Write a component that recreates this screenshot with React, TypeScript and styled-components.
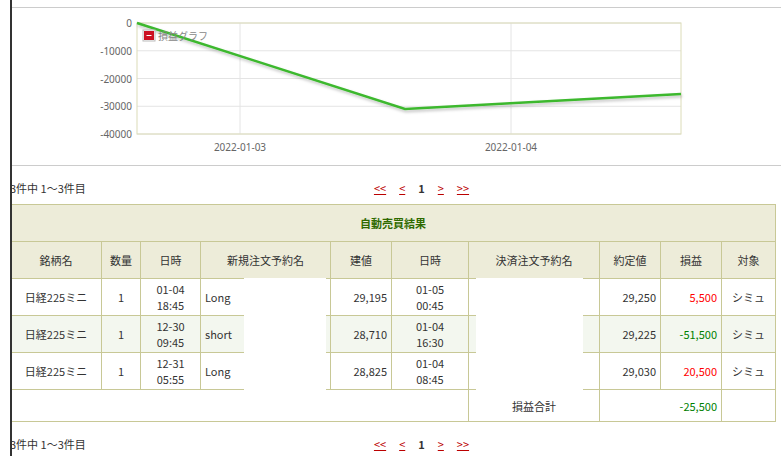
import React from 'react';
import styled, { createGlobalStyle } from 'styled-components';

const Global = createGlobalStyle`
  body { margin: 0; background: #fff; font-family: "Noto Sans CJK JP", "Noto Sans", sans-serif; font-size: 11px; color: #333; }
`;

const Page = styled.div`
  margin-left: 10px;
  border-left: 2px solid #333;
  padding-top: 7px;
  width: 771px;
  height: 456px;
  overflow: hidden;
`;

const ChartBox = styled.div`
  border-top: 1px solid #ccc;
  border-bottom: 1px solid #ccc;
  height: 157px;
`;

const Pager = styled.div`
  display: grid;
  grid-template-columns: 1fr auto 1fr;
  align-items: center;
  height: 38px;
  padding-top: 6px;
  box-sizing: border-box;
  margin-left: -2px;
  font-size: 11px;
`;

const Links = styled.div`
  display: flex;
  gap: 13px;
  margin-left: 50px;
  a { color: #b00; text-decoration: underline; }
  b { color: #333; }
`;

const Table = styled.table`
  border-collapse: collapse;
  width: 765px;
  margin-left: -2px;
  table-layout: fixed;
  td, th { border: 1px solid #c8c896; padding: 0 4px; font-weight: normal; font-size: 11px; line-height: 16px; }
`;

const Title = styled.th`
  background: #edecd9;
  height: 36px;
  color: #2f6a00;
  && { font-weight: bold; }
`;

const Head = styled.th`
  background: #edecd9;
  height: 36px;
`;

const Row = styled.tr<{ $alt?: boolean }>`
  background: ${p => (p.$alt ? '#f3f7ef' : '#fff')};
  td { height: 36px; }
`;

const SumRow = styled.tr`
  td { height: 31px; padding-top: 0; padding-bottom: 0; }
`;

const Cell = styled.td<{ $align?: string; $color?: string }>`
  text-align: ${p => p.$align || 'center'};
  color: ${p => p.$color || '#333'};
  position: relative;
`;

const Blank = styled.span<{ $l: number; $r: number }>`
  position: absolute;
  top: -1px;
  bottom: -1px;
  left: ${p => p.$l}px;
  right: ${p => p.$r}px;
  background: #fff;
`;

const rows = [
  ['01-04', '18:45', 'Long', '29,195', '01-05', '00:45', '29,250', '5,500', '#f00'],
  ['12-30', '09:45', 'short', '28,710', '01-04', '16:30', '29,225', '-51,500', '#008000'],
  ['12-31', '05:55', 'Long', '28,825', '01-04', '08:45', '29,030', '20,500', '#f00'],
];

const Chart = () => {
  const x0 = 125, x1 = 669, y0 = 15, y1 = 126;
  const yl = [0, -10000, -20000, -30000, -40000];
  return (
    <svg width="771" height="157" style={{ display: 'block' }}>
      <defs>
        <filter id="sh"><feDropShadow dx="1" dy="2" stdDeviation="1.5" floodColor="#000" floodOpacity="0.25" /></filter>
      </defs>
      {yl.map((v, i) => {
        const y = y0 + (i * (y1 - y0)) / 4;
        return (
          <g key={v}>
            <line x1={x0} x2={x1} y1={y} y2={y} stroke="#e4e4e4" />
            <text x={x0 - 5} y={y + 4} textAnchor="end" fontSize="10" fill="#666" fontFamily="Noto Sans">{v}</text>
          </g>
        );
      })}
      {[228, 499].map((x, i) => (
        <g key={x}>
          <line x1={x} x2={x} y1={y0} y2={y1} stroke="#e4e4e4" />
          <text x={x} y={y1 + 17} textAnchor="middle" fontSize="10" fill="#666" fontFamily="Noto Sans">{i ? '2022-01-04' : '2022-01-03'}</text>
        </g>
      ))}
      <rect x={x0} y={y0} width={x1 - x0} height={y1 - y0} fill="none" stroke="#dcdcb8" />
      <polyline points={`${x0},${y0} 393,101 669,86`} fill="none" stroke="#3cb82e" strokeWidth="2.5" filter="url(#sh)" />
      <rect x="131" y="22" width="12" height="11" fill="#fff" stroke="#bbb" />
      <rect x="132" y="23" width="10" height="9" fill="#cc1122" />
      <line x1="134.5" x2="139.5" y1="27.5" y2="27.5" stroke="#fff" />
      <text x="146" y="32" fontSize="10" fill="#888">損益グラフ</text>
    </svg>
  );
};

const PagerRow = () => (
  <Pager>
    <span>3件中 1～3件目</span>
    <Links><a>&lt;&lt;</a><a>&lt;</a><b>1</b><a>&gt;</a><a>&gt;&gt;</a></Links>
    <span />
  </Pager>
);

export default function App() {
  const widths = [91, 39, 60, 130, 61, 77, 131, 61, 61, 54];
  const heads = ['銘柄名', '数量', '日時', '新規注文予約名', '建値', '日時', '決済注文予約名', '約定値', '損益', '対象'];
  return (
    <>
      <Global />
      <Page>
        <ChartBox><Chart /></ChartBox>
        <PagerRow />
        <Table>
          <colgroup>{widths.map((w, i) => <col key={i} style={{ width: w }} />)}</colgroup>
          <thead>
            <tr><Title colSpan={10}>自動売買結果</Title></tr>
            <tr>{heads.map((h, i) => <Head key={i}>{h}</Head>)}</tr>
          </thead>
          <tbody>
            {rows.map((r, i) => (
              <Row key={i} $alt={i === 1}>
                <Cell>日経225ミニ</Cell>
                <Cell>1</Cell>
                <Cell>{r[0]}<br />{r[1]}</Cell>
                <Cell $align="left">{r[2]}<Blank $l={43} $r={4} /></Cell>
                <Cell $align="right">{r[3]}</Cell>
                <Cell>{r[4]}<br />{r[5]}</Cell>
                <Cell><Blank $l={7} $r={16} /></Cell>
                <Cell $align="right">{r[6]}</Cell>
                <Cell $align="right" $color={r[8]}>{r[7]}</Cell>
                <Cell>シミュ</Cell>
              </Row>
            ))}
            <SumRow>
              <Cell colSpan={6} />
              <Cell>損益合計</Cell>
              <Cell colSpan={2} $align="right" $color="#008000">-25,500</Cell>
              <Cell />
            </SumRow>
          </tbody>
        </Table>
        <PagerRow />
      </Page>
    </>
  );
}
